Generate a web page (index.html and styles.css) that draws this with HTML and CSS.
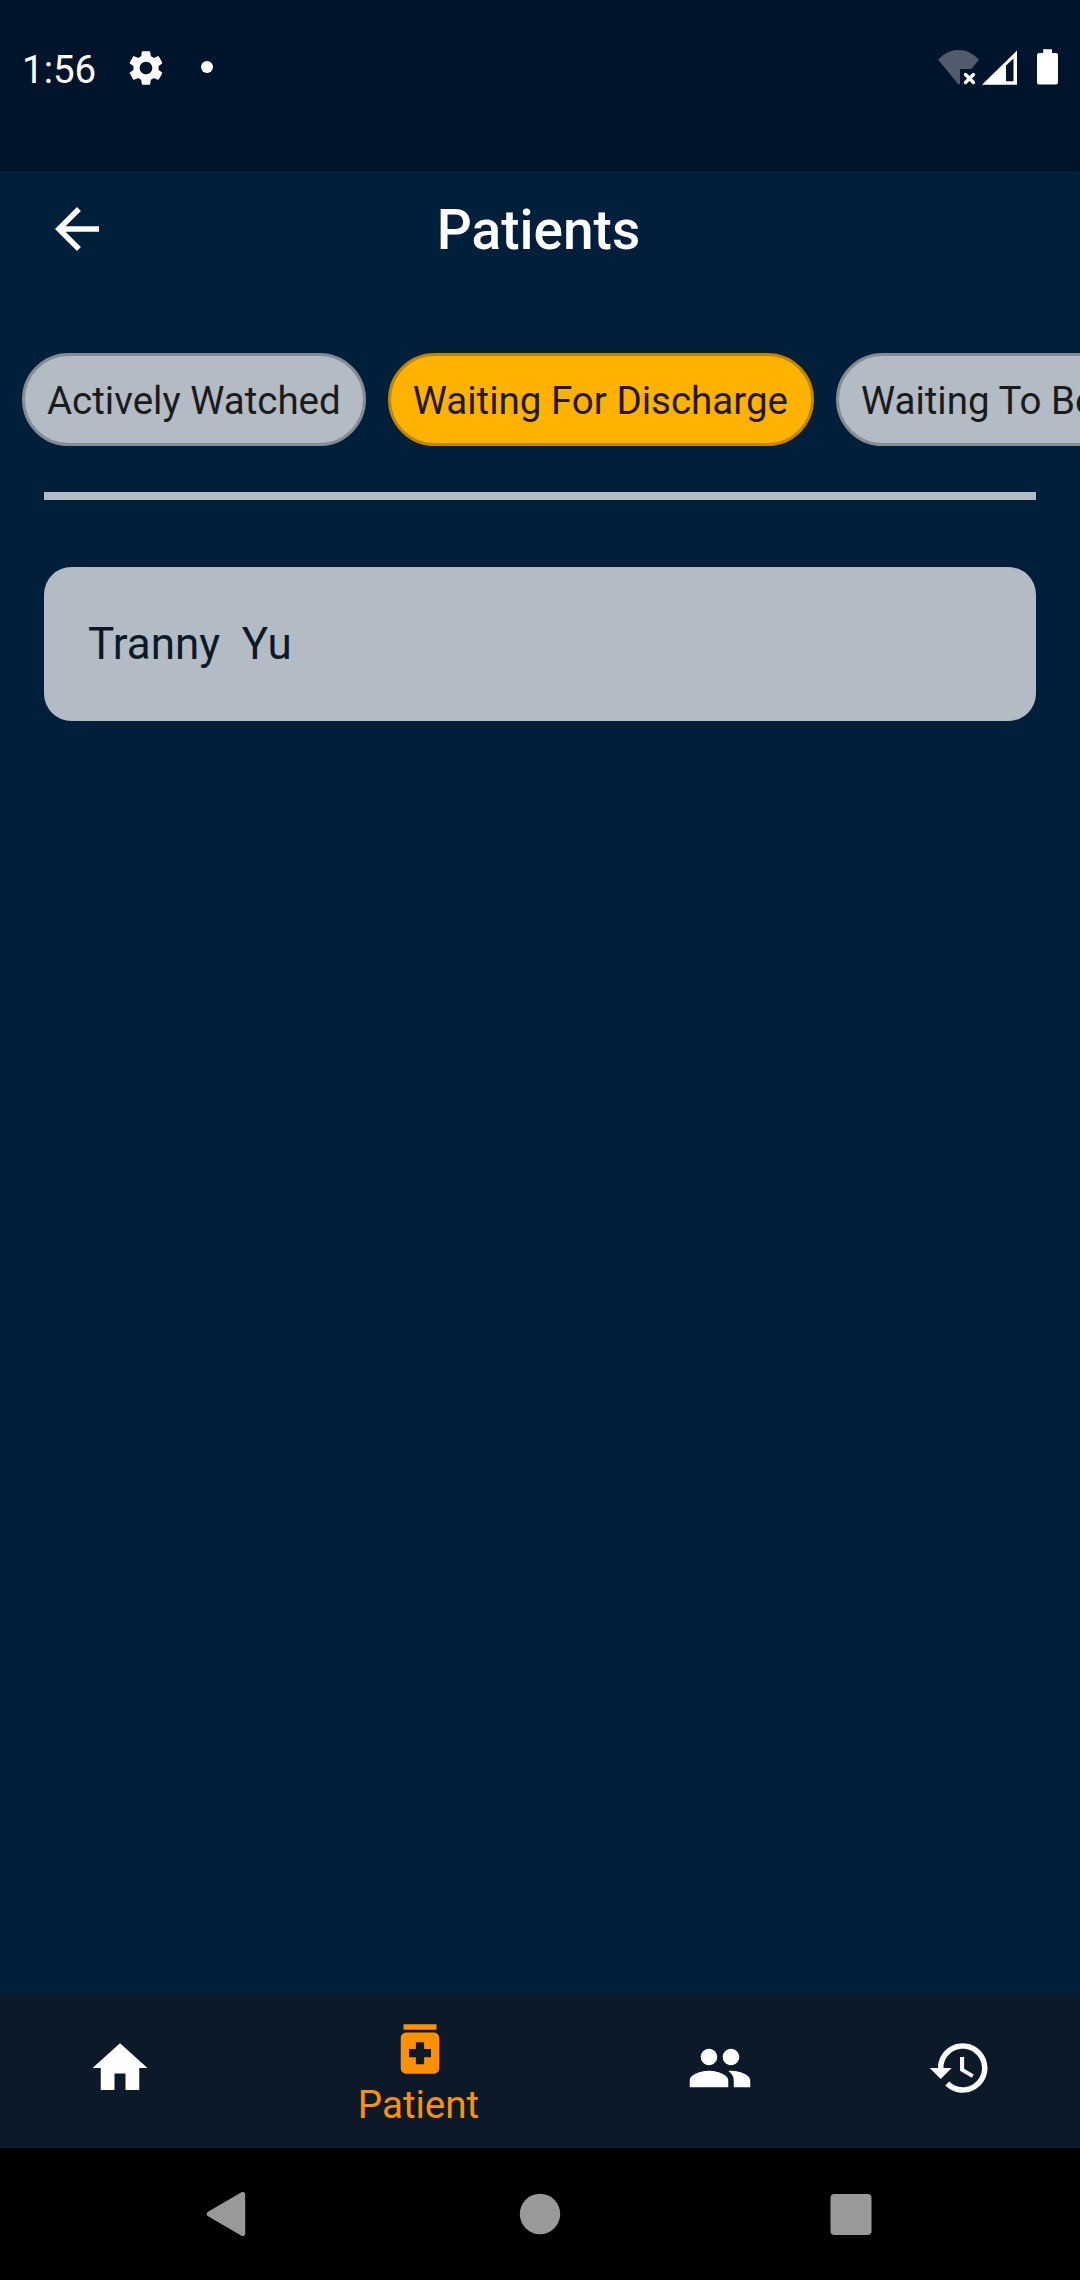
FILE: index.html
```html
<!DOCTYPE html>
<html lang="en">
<head>
<meta charset="utf-8">
<title>Patients</title>
<link rel="stylesheet" href="styles.css">
</head>
<body>
<div class="screen">
  <div class="status">
    <span class="clock">1:56</span>
    <svg class="gear" width="42" height="42" viewBox="0 0 24 24"><path fill="#fff" d="M19.14 12.94c.04-.3.06-.61.06-.94 0-.32-.02-.64-.07-.94l2.03-1.58c.18-.14.23-.41.12-.61l-1.92-3.32c-.12-.22-.37-.29-.59-.22l-2.39.96c-.5-.38-1.03-.7-1.62-.94l-.36-2.54c-.04-.24-.24-.41-.48-.41h-3.84c-.24 0-.43.17-.47.41l-.36 2.54c-.59.24-1.13.57-1.62.94l-2.39-.96c-.22-.08-.47 0-.59.22L2.74 8.87c-.12.21-.08.47.12.61l2.03 1.58c-.05.3-.09.63-.09.94s.02.64.07.94l-2.03 1.58c-.18.14-.23.41-.12.61l1.92 3.32c.12.22.37.29.59.22l2.39-.96c.5.38 1.03.7 1.62.94l.36 2.54c.05.24.24.41.48.41h3.84c.24 0 .44-.17.47-.41l.36-2.54c.59-.24 1.13-.56 1.62-.94l2.39.96c.22.08.47 0 .59-.22l1.92-3.32c.12-.22.07-.47-.12-.61l-2.01-1.58zM12 15.6c-1.98 0-3.6-1.62-3.6-3.6s1.62-3.6 3.6-3.6 3.6 1.62 3.6 3.6-1.62 3.6-3.6 3.6z"/></svg>
    <span class="dot"></span>
    <svg class="signals" width="122" height="38" viewBox="0 0 122 38">
      <path fill="#505c6b" d="M0 11.5Q9 2 20.500 2T41 11.5L33.500 21H22V35.500L20.500 36.500Z"/>
      <path stroke="#fff" stroke-width="3.4" stroke-linecap="round" d="M27.500 26.500l8 8m0-8l-8 8"/>
      <path fill="#fff" fill-rule="evenodd" d="M44 36.700 79 2.500V36.700ZM68 17.500V33.300H75.500V10.500Z"/>
      <path fill="#fff" d="M105.200 1.200h8.800v3.800h4q2 0 2 2V34.600q0 2-2 2h-17q-2 0-2-2V7q0-2 2-2h4.200z"/>
    </svg>
  </div>
  <header class="appbar">
    <svg class="back" width="66" height="66" viewBox="0 0 24 24"><path fill="#fff" d="M20 11H7.830l5.590-5.590L12 4l-8 8 8 8 1.410-1.410L7.830 13H20v-2z"/></svg>
    <h1 class="title">Patients</h1>
  </header>
  <div class="chips">
    <span class="chip">Actively Watched</span>
    <span class="chip selected">Waiting For Discharge</span>
    <span class="chip">Waiting To Be Seen</span>
  </div>
  <main class="content">
    <div class="divider"></div>
    <div class="card">Tranny&nbsp; Yu</div>
  </main>
  <nav class="tabs">
    <div class="tab"><svg width="66" height="66" viewBox="0 0 24 24"><path fill="currentColor" d="M10 20v-6h4v6h5v-8h3L12 3 2 12h3v8z"/></svg></div>
    <div class="tab active"><svg width="66" height="66" viewBox="0 0 24 24"><path fill="currentColor" d="M6 3h12v2H6zm11 3H7c-1.100 0-2 .9-2 2v11c0 1.100.9 2 2 2h10c1.100 0 2-.9 2-2V8c0-1.100-.9-2-2-2zm-1 9h-2.500v2.500h-3V15H8v-3h2.500V9.500h3V12H16v3z"/></svg><span class="tab-label">Patient</span></div>
    <div class="tab"><svg width="66" height="66" viewBox="0 0 24 24"><path fill="currentColor" d="M16 11c1.660 0 2.990-1.340 2.990-3S17.660 5 16 5c-1.660 0-3 1.340-3 3s1.340 3 3 3zm-8 0c1.660 0 2.990-1.340 2.990-3S9.660 5 8 5C6.340 5 5 6.340 5 8s1.340 3 3 3zm0 2c-2.330 0-7 1.170-7 3.500V19h14v-2.500c0-2.330-4.670-3.500-7-3.500zm8 0c-.29 0-.62.02-.97.05 1.160.84 1.970 1.970 1.970 3.450V19h6v-2.500c0-2.330-4.670-3.500-7-3.500z"/></svg></div>
    <div class="tab"><svg width="66" height="66" viewBox="0 0 24 24"><path fill="currentColor" d="M13 3c-4.970 0-9 4.030-9 9H1l3.890 3.890.07.14L9 12H6c0-3.870 3.130-7 7-7s7 3.130 7 7-3.130 7-7 7c-1.930 0-3.680-.79-4.940-2.060l-1.420 1.420C8.270 19.990 10.510 21 13 21c4.970 0 9-4.030 9-9s-4.030-9-9-9zm-1 5v5l4.280 2.540.72-1.210-3.500-2.080V8H12z"/></svg></div>
  </nav>
  <div class="sysnav">
    <svg width="50" height="50" viewBox="0 0 50 50"><path fill="#999" stroke="#999" stroke-width="5" stroke-linejoin="round" d="M7.300 25 40.700 5.500V44.500Z"/></svg>
    <svg width="50" height="50" viewBox="0 0 50 50"><circle cx="25" cy="25" r="20.200" fill="#999"/></svg>
    <svg width="50" height="50" viewBox="0 0 50 50"><rect x="4.500" y="5" width="41" height="41" rx="4" fill="#999"/></svg>
  </div>
</div>
</body>
</html>
```
FILE: styles.css
```css
* { box-sizing: border-box; }

body {
  margin: 0;
  font-family: Roboto, "Liberation Sans", sans-serif;
  background: #001f3a;
}

svg { display: block; flex: none; }

.screen {
  width: 1080px;
  height: 2280px;
  display: flex;
  flex-direction: column;
  overflow: hidden;
}

.status {
  height: 171px;
  flex: none;
  display: flex;
  align-items: flex-start;
  padding: 46px 20px 0 22px;
  background: #00142b;
  color: #fff;
}

.clock {
  width: 103px;
  font-size: 38.5px;
  line-height: 48px;
}

.gear { margin-top: 1px; }

.dot {
  width: 12px;
  height: 12px;
  margin: 15px 0 0 34px;
  border-radius: 50%;
  background: #fff;
}

.signals { margin: 2px 0 0 auto; }

.appbar {
  height: 116px;
  flex: none;
  display: grid;
  grid-template-columns: 1fr auto 1fr;
  align-items: center;
  padding: 0 45px 0 44px;
}

.title {
  margin: 0;
  padding: 2px 2px 0 0;
  color: #fff;
  font-size: 55px;
  font-weight: 500;
  line-height: 64px;
}

.chips {
  display: flex;
  flex: none;
  gap: 22px;
  padding: 66px 0 0 22px;
}

.chip {
  height: 93px;
  flex: none;
  padding: 0 22px;
  border: 3px solid #868c94;
  border-radius: 47px;
  background: #b3bbc5;
  color: #191b1c;
  font-size: 38.5px;
  line-height: 89px;
  white-space: nowrap;
}

.chip.selected {
  padding-right: 23px;
  border-color: #bf8600;
  background: #ffb300;
  color: #231900;
}

.content {
  flex: 1;
  padding: 46px 44px 0;
}

.divider {
  height: 8px;
  background: #b3bbc5;
}

.card {
  height: 154px;
  margin-top: 67px;
  padding: 0 44px;
  border-radius: 27.5px;
  background: #b3bbc5;
  color: #0c1929;
  font-size: 44px;
  line-height: 154px;
}

.tabs {
  height: 154px;
  flex: none;
  display: grid;
  grid-template-columns: 240px 360px 240px 240px;
  background: #0c1929;
  color: #fff;
}

.tab {
  display: flex;
  flex-direction: column;
  align-items: center;
  padding-top: 41px;
}

.tab.active {
  padding-top: 22px;
  color: #ff9100;
  font-size: 38.5px;
  line-height: 45px;
}

.tab-label { padding-right: 3px; }

.sysnav {
  height: 132px;
  flex: none;
  display: flex;
  justify-content: space-between;
  padding: 41px 204px 0 202px;
  background: #000;
}

.sysnav svg:nth-child(2) { margin-left: 2px; }
```
